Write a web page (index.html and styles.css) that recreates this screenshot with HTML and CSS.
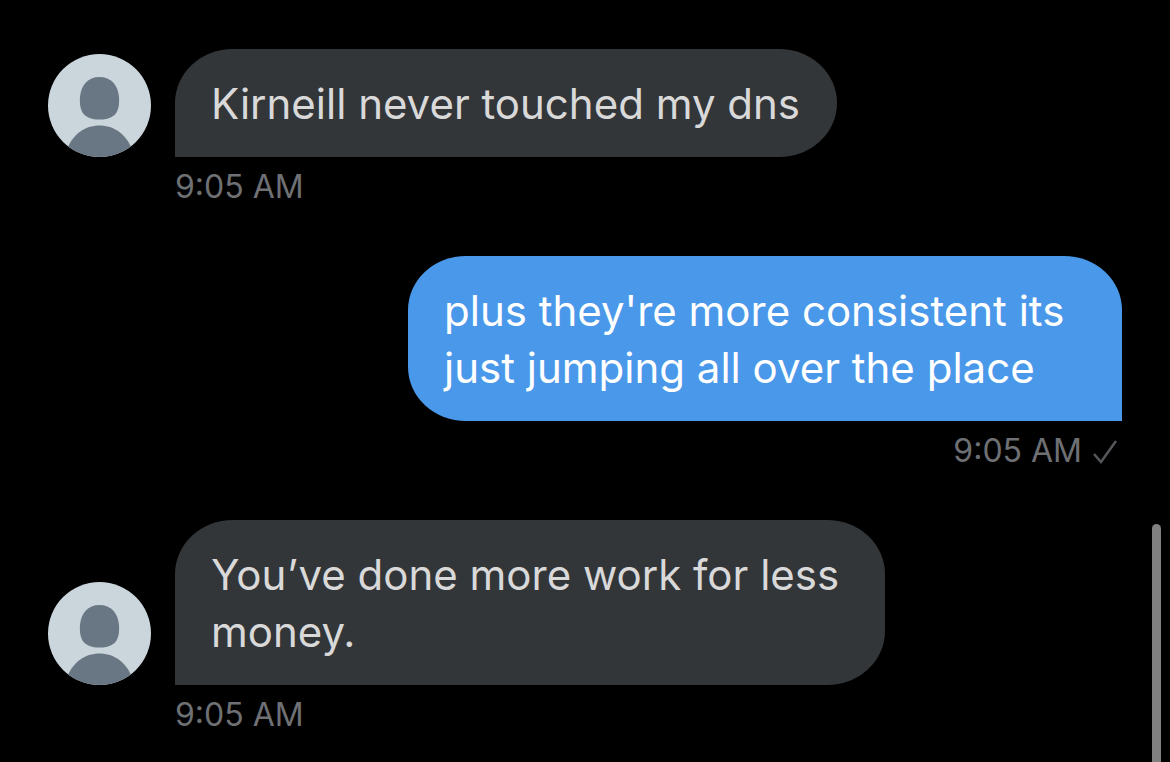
FILE: index.html
```html
<!DOCTYPE html>
<html lang="en">
<head>
  <meta charset="UTF-8" />
  <meta name="viewport" content="width=device-width, initial-scale=1.0"/>
  <title>Messages</title>
  <link rel="stylesheet" href="styles.css">
</head>
<body>

<svg class="sprite" aria-hidden="true">
  <symbol id="person" viewBox="0 0 103 103">
    <rect width="103" height="103" fill="#cbd5dc"/>
    <path fill="#697784" d="M51.500 23C63 23 70 31 71 43C72 58 67 65.500 51.500 65.500C36 65.500 31 58 32 43C33 31 40 23 51.500 23Z"/>
    <path fill="#697784" d="M18 98C24 80 37 71.500 51.500 71.500C66 71.500 79 80 85 98V103H18Z"/>
  </symbol>
</svg>

<main class="chat">
  <div class="message">
    <svg class="avatar" role="img" aria-label="Profile picture"><use href="#person"/></svg>
    <p class="bubble">Kirneill never touched my dns</p>
    <div class="meta"><time datetime="09:05">9:05 AM</time></div>
  </div>

  <div class="message sent">
    <p class="bubble">plus they're more consistent its just jumping all over the place</p>
    <div class="meta">
      <time datetime="09:05">9:05 AM</time>
      <svg class="check" viewBox="0 0 26 26" role="img" aria-label="Sent"><path d="M2 16L9 24L24 3"/></svg>
    </div>
  </div>

  <div class="message">
    <svg class="avatar" role="img" aria-label="Profile picture"><use href="#person"/></svg>
    <p class="bubble">You’ve done more work for less money.</p>
    <div class="meta"><time datetime="09:05">9:05 AM</time></div>
  </div>
</main>

<div class="scroll-thumb"></div>

</body>
</html>
```
FILE: styles.css
```css
body {
  margin: 0;
  background: #000;
  font-family: Inter, "Liberation Sans", sans-serif;
  overflow: hidden;
}
.sprite {
  display: none;
}
.chat {
  display: flex;
  flex-direction: column;
  gap: 49px;
  padding: 49px 48px 0;
}
.message {
  display: grid;
  grid-template-columns: 103px 1fr;
  column-gap: 24px;
}
.avatar {
  width: 103px;
  height: 103px;
  border-radius: 50%;
  align-self: end;
}
.bubble {
  grid-column: 2;
  justify-self: start;
  box-sizing: border-box;
  max-width: 75%;
  margin: 0;
  padding: 26px 37px 25px 36px;
  border-radius: 58px 58px 58px 0 / 54px 54px 54px 0;
  background: #333639;
  color: #d9d9d9;
  font-size: 42px;
  line-height: 57px;
}
.meta {
  grid-column: 2;
  display: flex;
  align-items: center;
  gap: 10px;
  padding-top: 10px;
  color: #6e7074;
  font-size: 32px;
  line-height: 40px;
}
.sent .bubble {
  justify-self: end;
  max-width: 714px;
  border-radius: 58px 58px 0 58px / 54px 54px 0 54px;
  background: #4a98e9;
  color: #fff;
}
.sent .meta {
  justify-content: flex-end;
  padding-right: 4px;
}
.check {
  width: 26px;
  height: 26px;
  fill: none;
  stroke: #55575a;
  stroke-width: 2.5;
}
.scroll-thumb {
  position: fixed;
  top: 524px;
  right: 9px;
  bottom: 0;
  width: 9px;
  border-radius: 5px 5px 0 0;
  background: #808080;
}
```
